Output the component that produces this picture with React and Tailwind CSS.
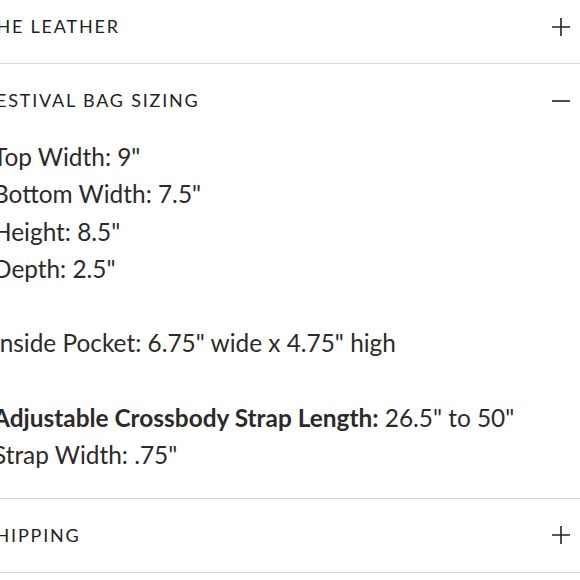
import React from "react";

function Plus() {
  return (
    <svg width="20" height="20" viewBox="0 0 20 20" className="shrink-0">
      <path d="M10 1v18M1 10h18" stroke="#222" strokeWidth="1.6" fill="none" />
    </svg>
  );
}
function Minus() {
  return (
    <svg width="20" height="20" viewBox="0 0 20 20" className="shrink-0">
      <path d="M1 10h18" stroke="#222" strokeWidth="1.6" fill="none" />
    </svg>
  );
}

function Head({ title, open }) {
  return (
    <div className="flex h-[73px] items-center justify-between pr-[9px]">
      <span className="ml-[-8px] text-[18px] uppercase tracking-[0.1em] text-[#222]">
        {title}
      </span>
      {open ? <Minus /> : <Plus />}
    </div>
  );
}

export default function App() {
  return (
    <div className="h-[580px] w-[580px] overflow-hidden bg-white font-['Lato','Noto_Sans',sans-serif]">
      <div className="ml-[-8px] mt-[-10px] w-[588px]">
        <div className="border-b border-[#d8d8d8]">
          <Head title="The Leather" />
        </div>
        <div className="border-b border-[#d8d8d8]">
          <Head title="Festival Bag Sizing" open />
          <div className="pb-[24px] pt-[1px] pl-[1px] text-[24.4px] leading-[37.3px] text-[#2b2b2b]">
            <p>Top Width: 9"</p>
            <p>Bottom Width: 7.5"</p>
            <p>Height: 8.5"</p>
            <p>Depth: 2.5"</p>
            <p>&nbsp;</p>
            <p>Inside Pocket: 6.75" wide x 4.75" high</p>
            <p>&nbsp;</p>
            <p>
              <strong className="font-bold">Adjustable Crossbody Strap Length:</strong> 26.5" to 50"
            </p>
            <p>Strap Width: .75"</p>
          </div>
        </div>
        <div className="border-b border-[#d8d8d8]">
          <Head title="Shipping" />
        </div>
      </div>
    </div>
  );
}
